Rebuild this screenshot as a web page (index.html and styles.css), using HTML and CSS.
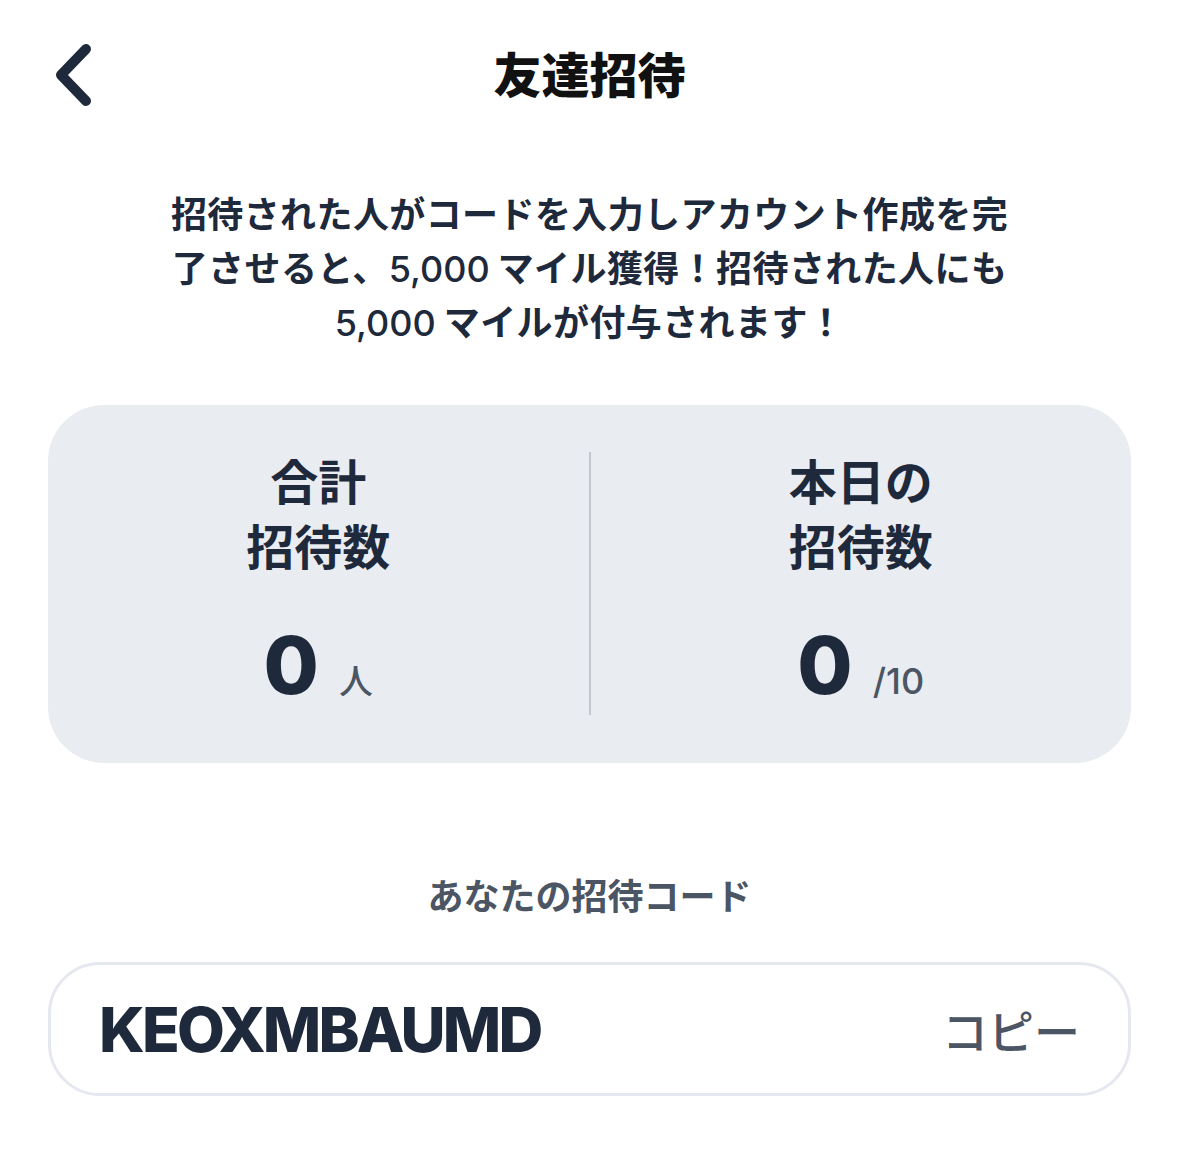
FILE: index.html
```html
<!DOCTYPE html>
<html lang="ja">
<head>
<meta charset="utf-8">
<title>友達招待</title>
<link rel="stylesheet" href="styles.css">
</head>
<body>
<div class="page">
  <header class="header">
    <button class="back" aria-label="戻る">
      <svg width="48" height="64" viewBox="0 0 48 64" fill="none">
        <path d="M36 6 L11 32 L36 58" stroke="#1e293b" stroke-width="10" stroke-linecap="round" stroke-linejoin="round"/>
      </svg>
    </button>
    <h1 class="title">友達招待</h1>
    <span class="spacer"></span>
  </header>

  <p class="desc">招待された人がコードを入力しアカウント作成を完了させると、<span class="latin">5,000</span>マイル獲得！招待された人にも<span class="latin">5,000</span>マイルが付与されます！</p>

  <section class="stats">
    <div class="stat">
      <div class="stat-label">合計<br>招待数</div>
      <div class="stat-value"><span class="num">0</span><span class="unit">人</span></div>
    </div>
    <div class="divider"></div>
    <div class="stat">
      <div class="stat-label">本日の<br>招待数</div>
      <div class="stat-value"><span class="num">0</span><span class="unit unit-latin">/10</span></div>
    </div>
  </section>

  <div class="code-label">あなたの招待コード</div>
  <div class="code-box">
    <span class="code">KEOXMBAUMD</span>
    <span class="copy">コピー</span>
  </div>
</div>
</body>
</html>
```

FILE: styles.css
```css
* { box-sizing: border-box; }
html, body { margin: 0; padding: 0; background: #ffffff; }
body {
  font-family: Inter, "Noto Sans CJK JP", sans-serif;
  color: #1e293b;
}
.page {
  width: 1179px;
  padding: 0 48px;
}
.header {
  height: 150px;
  display: grid;
  grid-template-columns: 120px 1fr 120px;
  align-items: center;
}
.back {
  border: 0;
  background: none;
  padding: 0;
  margin-left: 2px;
  width: 48px;
  height: 64px;
  display: flex;
  align-items: center;
  cursor: pointer;
}
.title {
  margin: 0 0 6px;
  text-align: center;
  font-size: 48px;
  font-weight: 800;
  color: #111111;
  font-family: "Noto Sans CJK JP", sans-serif;
}
.desc {
  margin: 35px auto 0;
  width: 850px;
  text-align: center;
  font-size: 36px;
  line-height: 54px;
  font-weight: 600;
  letter-spacing: 0.4px;
  font-family: "Noto Sans CJK JP", sans-serif;
  color: #1e293b;
}
.latin {
  font-family: Inter, sans-serif;
  font-weight: 500;
  letter-spacing: 0;
  line-height: 1;
  margin-right: 8px;
}
.stats {
  margin-top: 58px;
  height: 358px;
  background: #e9ecf1;
  border-radius: 56px;
  display: grid;
  grid-template-columns: 1fr 2px 1fr;
  padding: 47px 0 48px;
}
.divider {
  background: #c3c8d0;
  width: 2px;
}
.stat {
  display: flex;
  flex-direction: column;
  align-items: center;
}
.stat-label {
  margin-top: -5px;
  text-align: center;
  font-family: "Noto Sans CJK JP", sans-serif;
  font-size: 48px;
  line-height: 65px;
  font-weight: 700;
  color: #1e293b;
}
.stat-value {
  margin-top: 38px;
  display: flex;
  align-items: baseline;
  gap: 20px;
}
.num {
  font-family: Inter, sans-serif;
  font-size: 80px;
  font-weight: 800;
  line-height: 100px;
  color: #1e293b;
}
.unit {
  font-family: "Noto Sans CJK JP", sans-serif;
  font-size: 34px;
  font-weight: 500;
  color: #4b5563;
}
.unit-latin {
  font-family: Inter, sans-serif;
  font-size: 36px;
}
.code-label {
  margin-top: 106px;
  text-align: center;
  font-family: "Noto Sans CJK JP", sans-serif;
  font-size: 36px;
  line-height: 50px;
  font-weight: 600;
  color: #4b5563;
}
.code-box {
  margin-top: 43px;
  height: 134px;
  border: 3px solid #e5e8ee;
  border-radius: 52px;
  display: flex;
  align-items: center;
  justify-content: space-between;
  padding: 0 48px 0 48px;
}
.code {
  font-family: Inter, sans-serif;
  font-size: 62px;
  font-weight: 800;
  color: #1e293b;
  letter-spacing: -2.8px;
}
.copy {
  font-family: "Noto Sans CJK JP", sans-serif;
  font-size: 46px;
  font-weight: 500;
  color: #4b5563;
}
```
